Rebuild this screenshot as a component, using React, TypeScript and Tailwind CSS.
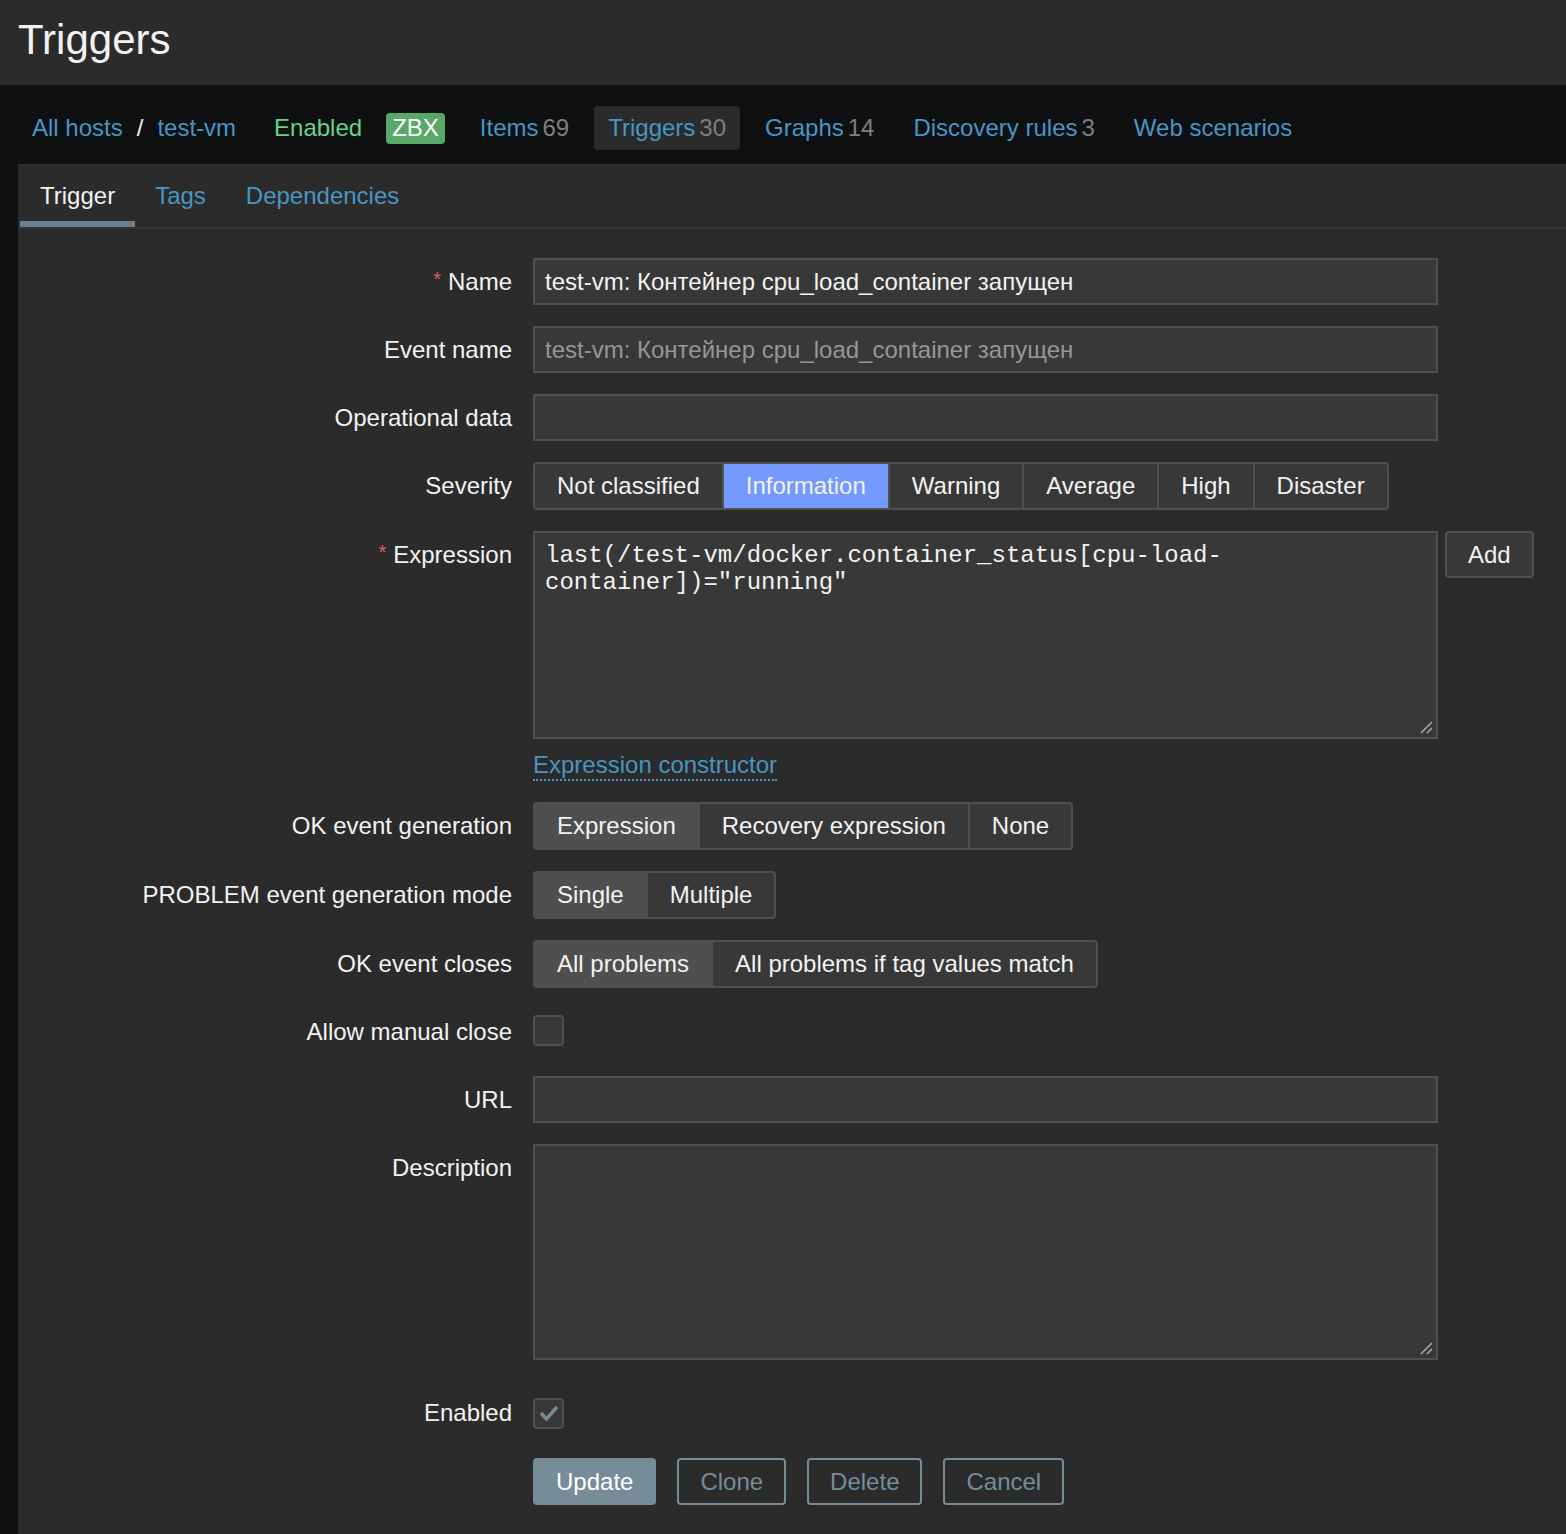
import React from 'react';

const sans = "font-['Liberation_Sans',Arial,sans-serif]";

interface NavItemProps {
  label: string;
  count?: number;
  active?: boolean;
}

const NavItem: React.FC<NavItemProps> = ({ label, count, active }) => {
  return (
    <div
      className={`h-[44px] px-[14px] flex items-center rounded-[4px] ${active ? 'bg-[#2b2b2b]' : ''}`}
    >
      <span className="text-[#4796c4]">{label}</span>
      {count !== undefined && <span className="ml-[4px] text-[#7f7f7f]">{count}</span>}
    </div>
  );
};

const Label: React.FC<{ text: string; required?: boolean; h?: string }> = ({ text, required, h }) => {
  return (
    <div className={`w-[494px] shrink-0 flex items-center justify-end ${h ?? 'h-[47px]'}`}>
      <span>
        {required && <span className="text-[#e45959] text-[20px] align-[4px] mr-[7px]">*</span>}
        {text}
      </span>
    </div>
  );
};

// segmented radio group, zabbix style
const Segments: React.FC<{ items: string[]; selected: number; selectedClass: string }> = ({
  items,
  selected,
  selectedClass,
}) => {
  return (
    <div className="inline-flex border-2 border-[#4f4f4f] rounded-[4px] overflow-hidden bg-[#383838]">
      {items.map((it, i) => (
        <div
          key={it}
          className={`h-[44px] px-[22px] flex items-center ${i > 0 ? 'border-l-2 border-[#4f4f4f]' : ''} ${
            i === selected ? selectedClass : ''
          }`}
        >
          {it}
        </div>
      ))}
    </div>
  );
};

const ResizeHandle = () => (
  <svg className="absolute right-[3px] bottom-[3px]" width="14" height="14" viewBox="0 0 14 14">
    <line x1="2" y1="13" x2="13" y2="2" stroke="#b0b0b0" strokeWidth="1.5" />
    <line x1="8" y1="13" x2="13" y2="8" stroke="#b0b0b0" strokeWidth="1.5" />
  </svg>
);

const Checkbox: React.FC<{ checked?: boolean }> = ({ checked }) => (
  <div className="w-[31px] h-[31px] rounded-[4px] border-2 border-[#4f4f4f] bg-[#383838] flex items-center justify-center">
    {checked && (
      <svg width="22" height="18" viewBox="0 0 22 18">
        <polyline points="3,9 8.5,15 19,3" fill="none" stroke="#768d99" strokeWidth="3.5" />
      </svg>
    )}
  </div>
);

const Input: React.FC<{ value?: string; muted?: boolean }> = ({ value, muted }) => (
  <div
    className={`w-[905px] h-[47px] border-2 border-[#4f4f4f] bg-[#383838] px-[10px] flex items-center ${
      muted ? 'text-[#969696]' : 'text-[#f2f2f2]'
    }`}
  >
    {value}
  </div>
);

export default function App() {
  return (
    <div className={`min-h-[1534px] bg-[#0e1012] text-[24px] text-[#f2f2f2] ${sans}`}>
      {/* title */}
      <div className="h-[85px] bg-[#2b2b2b] pl-[18px] pt-[19px]">
        <h1 className="text-[42px] leading-[42px] text-[#f2f2f2]">Triggers</h1>
      </div>

      {/* host navigation */}
      <div className="flex items-center pl-[32px] pt-[21px] pb-[14px]">
        <span className="text-[#4796c4]">All hosts</span>
        <span className="mx-[14px] text-[#f2f2f2]">/</span>
        <span className="text-[#4796c4]">test-vm</span>
        <span className="ml-[38px] text-[#66d38a]">Enabled</span>
        <span className="ml-[24px] h-[31px] px-[6px] rounded-[4px] bg-[#58a86a] text-white flex items-center">ZBX</span>
        <div className="ml-[21px] flex items-center gap-[11px]">
          <NavItem label="Items" count={69} />
          <NavItem label="Triggers" count={30} active />
          <NavItem label="Graphs" count={14} />
          <NavItem label="Discovery rules" count={3} />
          <NavItem label="Web scenarios" />
        </div>
      </div>

      {/* content */}
      <div className="ml-[18px] min-h-[1370px] bg-[#2b2b2b] border-t border-[#333333]">
        <div className="flex border-b-2 border-[#353535]">
          <div className="flex flex-col ml-[2px]">
            <div className="h-[56px] pt-[6px] px-[20px] flex items-center text-[#f2f2f2]">Trigger</div>
            <div className="h-[6px] bg-[#6b7f8e]" />
          </div>
          <div className="flex flex-col">
            <div className="h-[56px] pt-[6px] px-[20px] flex items-center text-[#4796c4]">Tags</div>
            <div className="h-[6px]" />
          </div>
          <div className="flex flex-col">
            <div className="h-[56px] pt-[6px] px-[20px] flex items-center text-[#4796c4]">Dependencies</div>
            <div className="h-[6px]" />
          </div>
        </div>

        <div className="flex flex-col gap-[21px] pt-[29px] pb-[28px]">
          <div className="flex gap-[21px]">
            <Label text="Name" required />
            <Input value="test-vm: Контейнер cpu_load_container запущен" />
          </div>
          <div className="flex gap-[21px]">
            <Label text="Event name" />
            <Input value="test-vm: Контейнер cpu_load_container запущен" muted />
          </div>
          <div className="flex gap-[21px]">
            <Label text="Operational data" />
            <Input />
          </div>
          <div className="flex gap-[21px]">
            <Label text="Severity" h="h-[48px]" />
            <Segments
              items={['Not classified', 'Information', 'Warning', 'Average', 'High', 'Disaster']}
              selected={1}
              selectedClass="bg-[#7499ff]"
            />
          </div>
          <div className="flex gap-[21px]">
            <Label text="Expression" required />
            <div className="flex flex-col items-start">
              <div className="flex items-start gap-[7px]">
                <div className="relative w-[905px] h-[208px] border-2 border-[#4f4f4f] bg-[#383838] px-[10px] pt-[9px] font-['Liberation_Mono',monospace] text-[24px] leading-[27px]">
                  <div>last(/test-vm/docker.container_status[cpu-load-</div>
                  <div>container])="running"</div>
                  <ResizeHandle />
                </div>
                <div className="h-[47px] px-[21px] flex items-center rounded-[4px] border-2 border-[#4f4f4f] bg-[#383838]">
                  Add
                </div>
              </div>
              <span className="mt-[12px] leading-[28px] text-[#4796c4] border-b-2 border-dotted border-[#4796c4]">
                Expression constructor
              </span>
            </div>
          </div>
          <div className="flex gap-[21px]">
            <Label text="OK event generation" h="h-[48px]" />
            <Segments items={['Expression', 'Recovery expression', 'None']} selected={0} selectedClass="bg-[#4f4f4f]" />
          </div>
          <div className="flex gap-[21px]">
            <Label text="PROBLEM event generation mode" h="h-[48px]" />
            <Segments items={['Single', 'Multiple']} selected={0} selectedClass="bg-[#4f4f4f]" />
          </div>
          <div className="flex gap-[21px]">
            <Label text="OK event closes" h="h-[48px]" />
            <Segments
              items={['All problems', 'All problems if tag values match']}
              selected={0}
              selectedClass="bg-[#4f4f4f]"
            />
          </div>
          <div className="flex gap-[21px] items-start h-[46px]">
            <Label text="Allow manual close" h="h-[46px]" />
            <div className="mt-[6px]">
              <Checkbox />
            </div>
          </div>
          <div className="flex gap-[21px]">
            <Label text="URL" />
            <Input />
          </div>
          <div className="flex gap-[21px]">
            <Label text="Description" />
            <div className="relative w-[905px] h-[216px] border-2 border-[#4f4f4f] bg-[#383838]">
              <ResizeHandle />
            </div>
          </div>
          <div className="flex gap-[21px] items-center mt-[8px]">
            <Label text="Enabled" h="h-[48px]" />
            <Checkbox checked />
          </div>
          <div className="flex gap-[21px]">
            <div className="w-[494px] shrink-0" />
            <div className="flex gap-[21px]">
              <div className="h-[47px] px-[21px] flex items-center rounded-[4px] border-2 border-[#768d99] bg-[#768d99] text-white">
                Update
              </div>
              <div className="h-[47px] px-[21px] flex items-center rounded-[4px] border-2 border-[#768d99] text-[#768d99]">
                Clone
              </div>
              <div className="h-[47px] px-[21px] flex items-center rounded-[4px] border-2 border-[#768d99] text-[#768d99]">
                Delete
              </div>
              <div className="h-[47px] px-[21px] flex items-center rounded-[4px] border-2 border-[#768d99] text-[#768d99]">
                Cancel
              </div>
            </div>
          </div>
        </div>
      </div>
    </div>
  );
}
